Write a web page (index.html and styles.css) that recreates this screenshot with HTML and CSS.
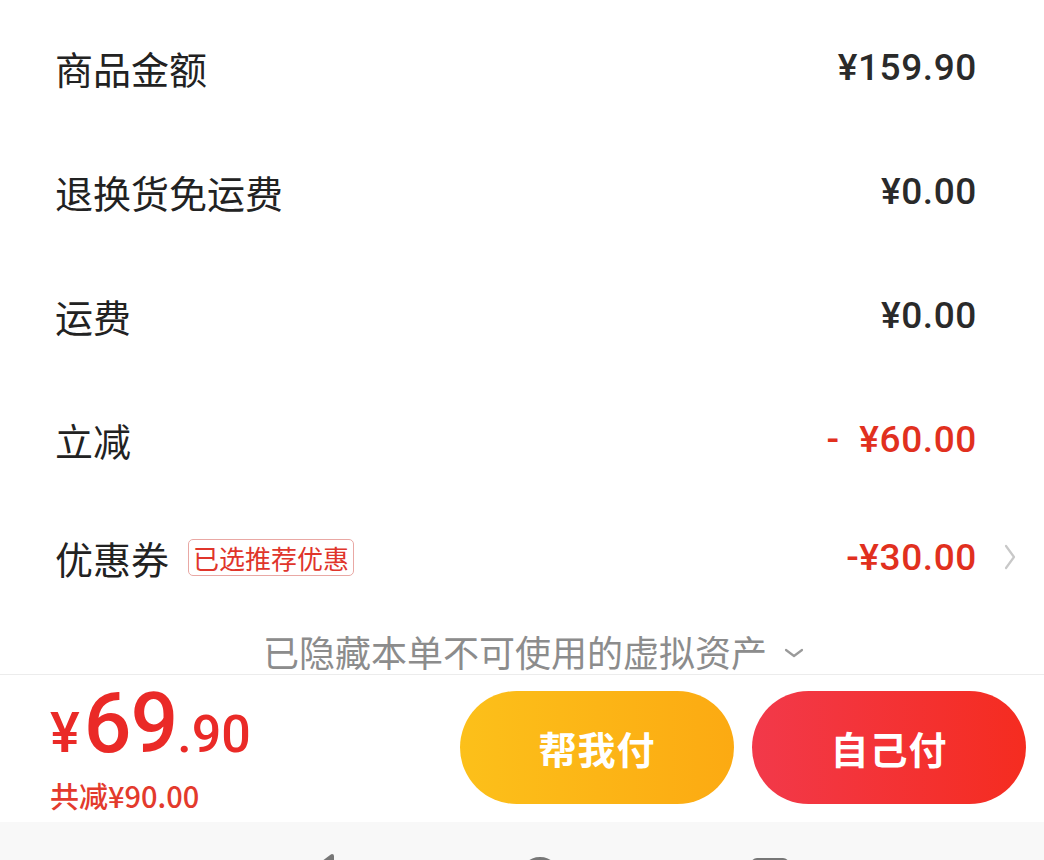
FILE: index.html
```html
<!DOCTYPE html>
<html lang="zh-CN">
<head>
    <meta charset="UTF-8" />
    <meta name="viewport" content="width=device-width, initial-scale=1.0"/>
    <title>确认订单</title>
    <link rel="stylesheet" href="styles.css">
</head>
<body>
<div class="detail">
    <div class="row">
        <span class="label">商品金额</span>
        <span class="value">¥159.90</span>
    </div>
    <div class="row">
        <span class="label">退换货免运费</span>
        <span class="value">¥0.00</span>
    </div>
    <div class="row">
        <span class="label">运费</span>
        <span class="value">¥0.00</span>
    </div>
    <div class="row">
        <span class="label">立减</span>
        <span class="value red">-&nbsp;&nbsp;¥60.00</span>
    </div>
    <div class="row coupon">
        <span class="label">优惠券<span class="tag">已选推荐优惠</span></span>
        <span class="value red">-¥30.00<svg class="arrow" width="14" height="28" viewBox="0 0 14 28"><path d="M3 3 L11 14 L3 25" fill="none" stroke="#c8c8c8" stroke-width="2.2" stroke-linecap="round" stroke-linejoin="round"/></svg></span>
    </div>
    <div class="hidden-tip">
        已隐藏本单不可使用的虚拟资产
        <svg width="22" height="14" viewBox="0 0 22 14"><path d="M3 4 L11 10 L19 4" fill="none" stroke="#9a9a9a" stroke-width="2.2" stroke-linecap="round" stroke-linejoin="round"/></svg>
    </div>
</div>

<!-- 底部结算栏 -->
<div class="pay-bar">
    <div class="total">
        <div class="price"><span class="yen">¥</span><span class="int">69</span><span class="dec">.90</span></div>
        <div class="saved">共减¥90.00</div>
    </div>
    <button class="btn btn-help">帮我付</button>
    <button class="btn btn-self">自己付</button>
</div>

<!-- 系统导航栏 -->
<div class="nav-bar">
    <svg class="nav-icon back" width="34" height="38" viewBox="0 0 34 38"><path d="M26 4 L6 19 L26 34 Z" fill="none" stroke="#777" stroke-width="4" stroke-linejoin="round"/></svg>
    <svg class="nav-icon home" width="44" height="44" viewBox="0 0 44 44"><circle cx="22" cy="22" r="18" fill="none" stroke="#777" stroke-width="4"/></svg>
    <svg class="nav-icon recent" width="40" height="40" viewBox="0 0 40 40"><rect x="3" y="3" width="34" height="34" rx="4" fill="none" stroke="#777" stroke-width="4"/></svg>
</div>
</body>
</html>
```

FILE: styles.css
```css
/* -------------------- 基础 -------------------- */
body{
    margin:0;padding:0;background:#fff;color:#222;
    font-family:"Noto Sans CJK SC",sans-serif;
    overflow:hidden;
}

/* -------------------- 金额明细 -------------------- */
.detail{padding:5px 67px 0 55px}
.row{
    height:124px;display:flex;align-items:center;justify-content:space-between;
}
.row.coupon{height:112px}
.label{font-size:38px;color:#222;display:flex;align-items:center}
.value{
    font-family:Roboto,"Noto Sans CJK SC",sans-serif;
    font-size:37px;font-weight:500;color:#2a2a2a;letter-spacing:.6px;
    display:flex;align-items:center;
}
.value.red{color:#e1301e}
.coupon .value{margin-right:-40px}
.arrow{margin-left:26px}
.tag{
    margin-left:19px;font-size:26px;color:#e0352b;
    border:1px solid #e9a8a4;border-radius:5px;
    padding:0 4px;height:35px;line-height:35px;
}
.hidden-tip{
    height:61px;display:flex;align-items:flex-end;justify-content:center;
    font-size:36px;color:#8c8c8c;gap:16px;padding-left:36px;
    line-height:46px;
}
.hidden-tip svg{margin-bottom:14px}

/* -------------------- 结算栏 -------------------- */
.pay-bar{
    height:148px;box-sizing:border-box;border-top:1px solid #ececec;
    display:flex;align-items:center;padding:0 18px 3px 50px;gap:18px;
}
.total{flex:1;color:#ea2a27;padding-top:6px}
.price{
    font-family:Roboto,"Noto Sans CJK SC",sans-serif;font-weight:500;
    display:flex;align-items:baseline;line-height:78px;
}
.price .yen{font-size:56px;margin-right:4px}
.price .int{font-size:84px;letter-spacing:-1px}
.price .dec{font-size:52px}
.saved{font-size:29px;margin-top:0;color:#e33a2c;font-weight:500}
.btn{
    width:274px;height:113px;border:none;border-radius:57px;
    color:#fff;font-family:"Noto Sans CJK SC",sans-serif;
    font-size:38px;font-weight:700;letter-spacing:1px;cursor:pointer;
}
.btn-help{background:linear-gradient(90deg,#fcc01a,#fcaa12)}
.btn-self{background:linear-gradient(90deg,#f2394a,#f52c20)}

/* -------------------- 系统导航 -------------------- */
.nav-bar{
    height:120px;background:#f8f8f8;position:relative;
}
.nav-icon{position:absolute}
.nav-icon.back{left:306px;top:30px}
.nav-icon.home{left:518px;top:33px}
.nav-icon.recent{left:750px;top:35px}
```
